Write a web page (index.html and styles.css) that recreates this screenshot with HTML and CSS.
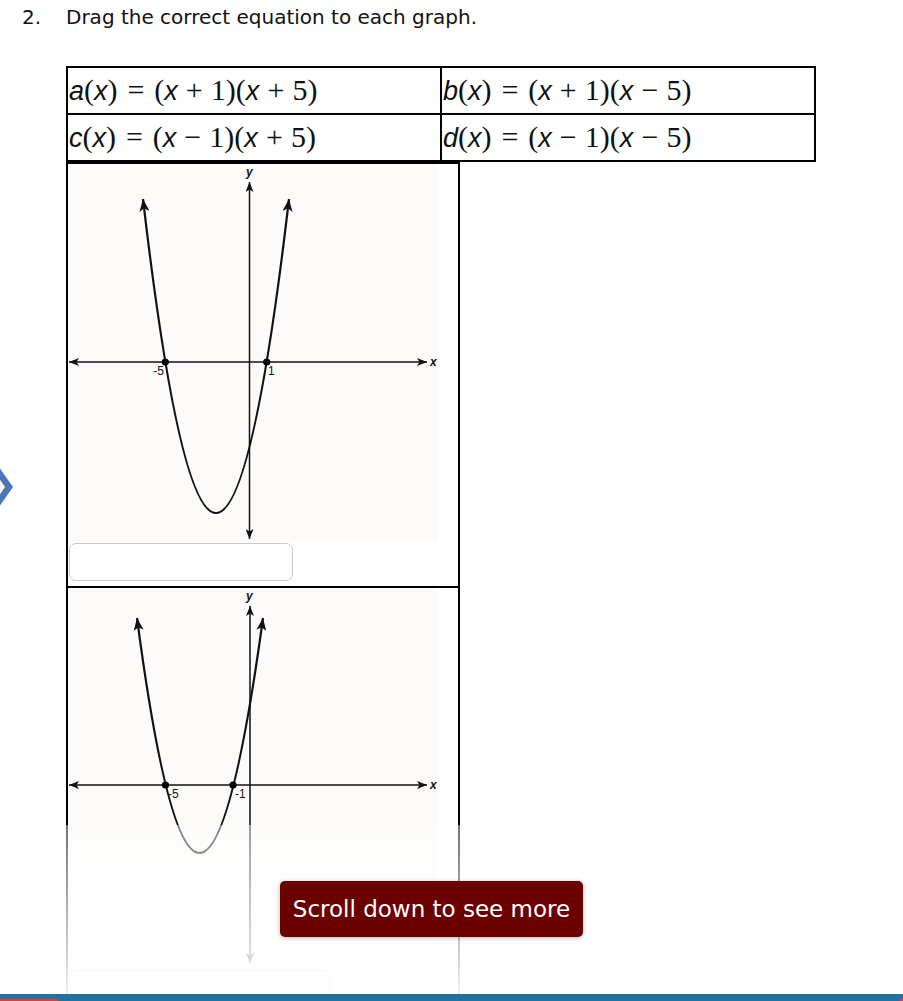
FILE: index.html
```html
<!DOCTYPE html>
<html lang="en">
<head>
    <meta charset="UTF-8">
    <title>Question 2</title>
    <link rel="stylesheet" href="styles.css">
</head>
<body>
    <!-- question prompt -->
    <div class="question">
        <span class="num">2.</span>
        <span class="prompt">Drag the correct equation to each graph.</span>
    </div>

    <!-- equation tiles -->
    <table class="choices">
        <tr>
            <td class="eq"><i>a</i>(<i>x</i>)<span class="rel">=</span>(<i>x</i><span class="op">+</span>1)(<i>x</i><span class="op">+</span>5)</td>
            <td class="eq"><i>b</i>(<i>x</i>)<span class="rel">=</span>(<i>x</i><span class="op">+</span>1)(<i>x</i><span class="op">&minus;</span>5)</td>
        </tr>
        <tr>
            <td class="eq"><i>c</i>(<i>x</i>)<span class="rel">=</span>(<i>x</i><span class="op">&minus;</span>1)(<i>x</i><span class="op">+</span>5)</td>
            <td class="eq"><i>d</i>(<i>x</i>)<span class="rel">=</span>(<i>x</i><span class="op">&minus;</span>1)(<i>x</i><span class="op">&minus;</span>5)</td>
        </tr>
    </table>

    <!-- graphs with drop targets -->
    <div class="target target-first">
        <svg class="graph" width="390" height="378" viewBox="68 163 390 378">
            <defs>
                <marker id="tip" viewBox="0 0 10 8" refX="10" refY="4" markerWidth="11" markerHeight="8" markerUnits="userSpaceOnUse" orient="auto-start-reverse">
                    <path d="M0,0 L10,4 L0,8 L2.5,4 Z" fill="#111"/>
                </marker>
                <marker id="tip-lg" viewBox="0 0 10 8" refX="10" refY="4" markerWidth="13" markerHeight="10" markerUnits="userSpaceOnUse" orient="auto-start-reverse">
                    <path d="M0,0 L10,4 L0,8 L2.5,4 Z" fill="#111"/>
                </marker>
            </defs>
            <rect x="69" y="163" width="369" height="377" fill="#fcfbf9"/>
            <line x1="69" y1="361" x2="427" y2="361" class="axis" marker-start="url(#tip)" marker-end="url(#tip)"/>
            <line x1="249.5" y1="181" x2="249.5" y2="538" class="axis" marker-start="url(#tip)" marker-end="url(#tip)"/>
            <text x="246" y="175" class="axis-name">y</text>
            <text x="430" y="365" class="axis-name">x</text>
            <path d="M143,198 Q216,826 289,198" class="curve" marker-start="url(#tip-lg)" marker-end="url(#tip-lg)"/>
            <circle cx="165.3" cy="361" r="3.6"/>
            <circle cx="266.7" cy="361" r="3.6"/>
            <text x="164" y="374" class="tick" text-anchor="end">-5</text>
            <text x="268" y="374" class="tick">1</text>
        </svg>
        <div class="drop"></div>
    </div>

    <div class="target target-next">
        <svg class="graph" width="390" height="381" viewBox="68 587 390 381">
            <rect x="69" y="587" width="369" height="378" fill="#fcfbf9"/>
            <line x1="69" y1="784" x2="427" y2="784" class="axis" marker-start="url(#tip)" marker-end="url(#tip)"/>
            <line x1="250" y1="605" x2="250" y2="962" class="axis" marker-start="url(#tip)" marker-end="url(#tip)"/>
            <text x="246" y="599" class="axis-name">y</text>
            <text x="430" y="788" class="axis-name">x</text>
            <path d="M137,617 Q199,1087 263,617" class="curve" marker-start="url(#tip-lg)" marker-end="url(#tip-lg)"/>
            <circle cx="165.5" cy="784" r="3.6"/>
            <circle cx="233" cy="784" r="3.6"/>
            <text x="168" y="797" class="tick">-5</text>
            <text x="235" y="797" class="tick">-1</text>
        </svg>
        <div class="drop drop-wide"></div>
    </div>

    <!-- content fades out below the fold -->
    <div class="fade"></div>

    <div class="scroll-note">Scroll down to see more</div>

    <svg class="nav-prev" width="16" height="46" viewBox="0 0 16 46">
        <polygon points="-9,2 -1,2 13,22 -1,42 -9,42 5,22" fill="#4a77b6"/>
    </svg>

    <div class="status-bar"></div>
</body>
</html>
```

FILE: styles.css
```css
* {
    margin: 0;
    padding: 0;
    box-sizing: border-box;
}

html, body {
    height: 100%;
}

body {
    position: relative;
    font-family: "DejaVu Sans", sans-serif;
    color: #111;
    background: #fff;
    overflow: hidden;
}

/* 문제 */
.question {
    display: flex;
    padding: 5px 0 0 22px;
    font-size: 20px;
    line-height: 24px;
}

.question .num {
    width: 44px;
}

/* 수식 보기 */
.choices {
    margin: 37px 0 0 66px;
    width: 750px;
    border-collapse: collapse;
    table-layout: fixed;
}

.choices td {
    border: 2px solid #000;
    height: 47px;
    padding: 0 0 2px 1px;
    vertical-align: middle;
}

.eq {
    font-family: "Liberation Serif", serif;
    font-size: 30px;
    line-height: 1;
    white-space: nowrap;
}

.eq i {
    font-family: "Liberation Sans", sans-serif;
    font-style: italic;
    font-size: 27px;
}

.eq .rel {
    margin: 0 0.33em;
}

.eq .op {
    margin: 0 0.27em;
}

/* 그래프 영역 */
.target {
    margin-left: 66px;
    width: 394px;
    border: 2px solid #000;
    background: #fff;
}

.target-first {
    height: 426px;
}

.target-next {
    border-top: 0;
    height: 480px;
}

.graph {
    display: block;
}

.axis {
    stroke: #111;
    stroke-width: 1.5;
}

.curve {
    fill: none;
    stroke: #111;
    stroke-width: 2.2;
}

.axis-name {
    font-family: "Liberation Sans", sans-serif;
    font-size: 12px;
    font-weight: bold;
    font-style: italic;
    fill: #111;
}

.tick {
    font-family: "Liberation Sans", sans-serif;
    font-size: 12px;
    fill: #111;
}

.drop {
    margin: 1px 0 0 1px;
    width: 224px;
    height: 38px;
    border: 1px solid #c9c9c9;
    border-radius: 7px;
    background: #fff;
}

.drop-wide {
    width: 261px;
}

/* 하단 페이드 */
.fade {
    position: absolute;
    left: 0;
    right: 0;
    top: 825px;
    height: 170px;
    background: linear-gradient(rgba(255, 255, 255, 0.45), rgba(255, 255, 255, 0.94));
}

.scroll-note {
    position: absolute;
    left: 280px;
    top: 881px;
    width: 303px;
    height: 56px;
    display: flex;
    align-items: center;
    justify-content: center;
    background: #6b0000;
    color: #fff;
    font-size: 23px;
    border-radius: 5px;
    box-shadow: 0 1px 4px rgba(0, 0, 0, 0.3);
}

.nav-prev {
    position: absolute;
    left: 0;
    top: 465px;
}

.status-bar {
    position: absolute;
    left: 0;
    right: 0;
    bottom: 0;
    height: 7px;
    background: #23729e;
}

.status-bar::before,
.status-bar::after {
    content: '';
    position: absolute;
    bottom: 0;
    height: 2px;
    background: #e8383d;
}

.status-bar::before {
    left: 0;
    width: 58px;
}

.status-bar::after {
    right: 0;
    width: 3px;
}
```
